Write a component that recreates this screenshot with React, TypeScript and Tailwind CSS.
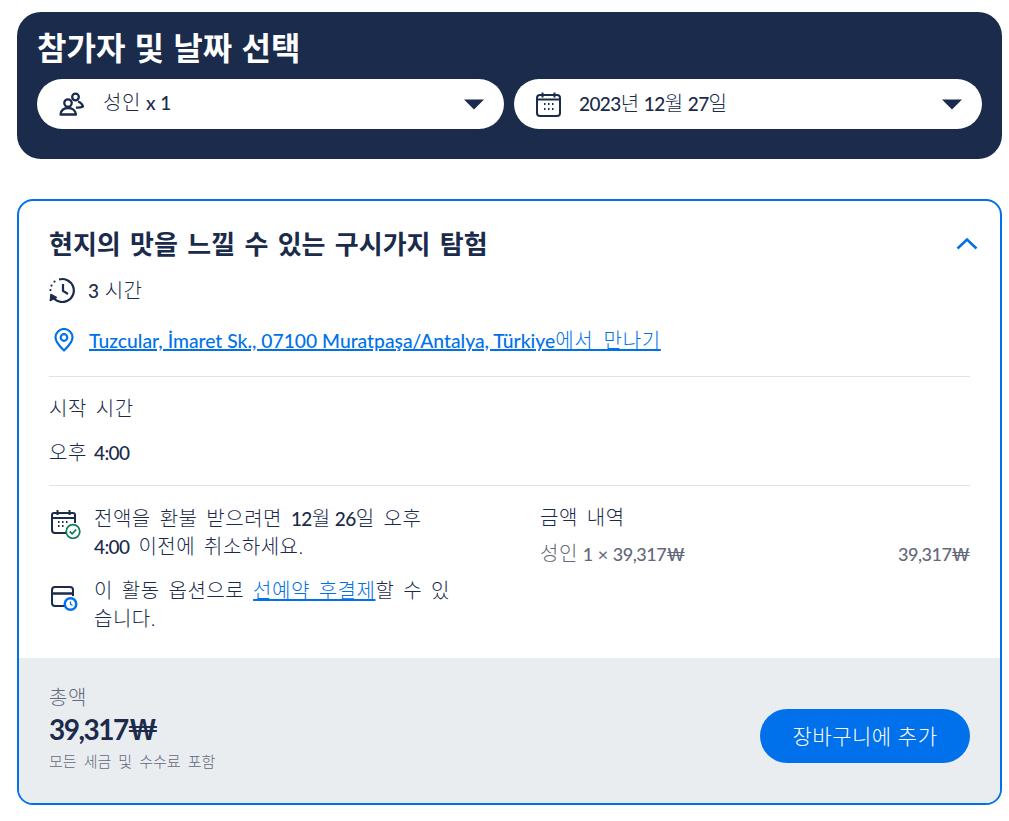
import { ReactNode } from "react";

const FONT = "font-['Lato','Noto_Sans_CJK_KR',sans-serif]";

function Num({ children, className = "[word-spacing:0]" }: { children: ReactNode; className?: string }) {
  return <span className={`text-[19px] font-medium leading-none tracking-[-0.6px] ${className}`}>{children}</span>;
}

function Price({ children }: { children: ReactNode }) {
  return <span className="text-[18px] font-medium leading-none tracking-[-0.5px] [word-spacing:1px]">{children}</span>;
}

function Caret() {
  return (
    <svg width="20" height="11" viewBox="0 0 20 11" className="shrink-0">
      <path d="M0 .5h20L10 10.500z" fill="#1b2b4b" />
    </svg>
  );
}

function PeopleIcon() {
  return (
    <svg width="25" height="25" viewBox="0 0 25 25" fill="none" stroke="#1b2b4b" strokeWidth="2.300" className="shrink-0">
      <circle cx="9" cy="11" r="3.700" />
      <circle cx="16.500" cy="5" r="3.300" />
      <path d="M1.500 22.500c0-4 3.500-6.500 7.500-6.500s7.500 2.500 8 6.500z" strokeLinejoin="round" />
      <path d="M19 9.500c2 .5 4 2 5 5-2 1-4.500 1.500-7 1" />
    </svg>
  );
}

function CalendarIcon() {
  return (
    <svg width="25" height="25" viewBox="0 0 25 25" fill="none" className="shrink-0">
      <rect x="1" y="3" width="23" height="21" rx="3" stroke="#1b2b4b" strokeWidth="2" />
      <path d="M1 7.500h23" stroke="#1b2b4b" strokeWidth="2" />
      <path d="M6.500 .5v5M18.500 .5v5" stroke="#1b2b4b" strokeWidth="2" />
      <path d="M8 12h1.500M12 12h1.500M16 12h1.500M8 17h1.500M12 17h1.500M16 17h1.500" stroke="#1b2b4b" strokeWidth="2" />
    </svg>
  );
}

function HistoryIcon() {
  return (
    <svg width="27" height="26" viewBox="0 0 27 26" fill="none" stroke="#1b2b4b" strokeWidth="2.200" className="shrink-0">
      <path d="M10 2.500a11.500 11.500 0 1 1-6.500 17" />
      <path d="M14 7v7l5 3" />
      <path d="M1 24l.8-7 6.200 3.500z" fill="#1b2b4b" strokeWidth="1" />
      <path d="M5.500 4.500v.1M2.500 8.500v.1M1.500 13v.1" strokeLinecap="round" />
    </svg>
  );
}

function PinIcon() {
  return (
    <svg width="20" height="24" viewBox="0 0 20 24" fill="none" stroke="#0071eb" strokeWidth="2.200" className="shrink-0">
      <path d="M10 22.500C6 18.500 1.500 14.500 1.500 9.500a8.500 8.500 0 0 1 17 0c0 5-4.500 9-8.500 13z" strokeLinejoin="round" />
      <circle cx="10" cy="9.500" r="3.300" />
    </svg>
  );
}

function RefundIcon() {
  return (
    <svg width="30" height="30" viewBox="0 0 30 30" fill="none" className="ml-[2px] mt-[5px] shrink-0">
      <path d="M15 24H4a3 3 0 0 1-3-3V6a2 2 0 0 1 2-2h19a2 2 0 0 1 2 2v8" stroke="#1b2b4b" strokeWidth="2" />
      <path d="M1 9h23M6.500 1v5M18.500 1v5" stroke="#1b2b4b" strokeWidth="2" />
      <path d="M7 13h1.500M11 13h1.500M15 13h1.500M7 17h1.500M11 17h1.500" stroke="#1b2b4b" strokeWidth="1.800" />
      <circle cx="22" cy="22.500" r="6.800" fill="#fff" stroke="#0f7f55" strokeWidth="1.800" />
      <path d="M18.800 22.500l2.300 2.300 4.100-4.300" stroke="#0f7f55" strokeWidth="1.800" />
    </svg>
  );
}

function PayLaterIcon() {
  return (
    <svg width="28" height="27" viewBox="0 0 28 27" fill="none" className="ml-[2px] mt-[10px] shrink-0">
      <path d="M14 20H4a3 3 0 0 1-3-3V4a3 3 0 0 1 3-3h15a3 3 0 0 1 3 3v6" stroke="#1b2b4b" strokeWidth="2" />
      <path d="M1 7.500h21" stroke="#1b2b4b" strokeWidth="2.500" />
      <circle cx="19.500" cy="18" r="7" fill="#0071eb" />
      <circle cx="19.500" cy="18" r="4.500" fill="#fff" />
      <path d="M19.500 15.500V18l2 1.500" stroke="#0071eb" strokeWidth="1.300" />
    </svg>
  );
}

function Select({ icon, className, children }: { icon: ReactNode; className: string; children: ReactNode }) {
  return (
    <div className={`flex h-[50px] items-center justify-between rounded-[25px] bg-white pl-[22px] pr-[20px] ${className}`}>
      <div className="flex items-center">{icon}{children}</div>
      <Caret />
    </div>
  );
}

export default function App() {
  return (
    <main className={`${FONT} min-h-screen bg-white pb-4 pl-[17px] pr-[7px] pt-[12px] text-[20px] font-light tracking-[0.5px] text-[#1b2b4b] [word-spacing:3px]`}>
      {/* Participants and date */}
      <section className="h-[147px] rounded-[24px] bg-[#1b2b4b] px-[20px] pt-[17px]">
        <h2 className="text-[32px] font-bold leading-[38px] tracking-normal text-white [word-spacing:1.5px]">참가자 및 날짜 선택</h2>
        <div className="mt-[12px] flex gap-[10px]">
          <Select icon={<PeopleIcon />} className="w-[467px]">
            <span className="mb-[4px] ml-[19px]">성인<Num className="[word-spacing:1px]"> x 1</Num></span>
          </Select>
          <Select icon={<CalendarIcon />} className="flex-1">
            <span className="mb-[2px] ml-[18px]"><Num>2023</Num>년<Num> 12</Num>월<Num> 27</Num>일</span>
          </Select>
        </div>
      </section>

      {/* Tour option */}
      <section className="mt-[40px] overflow-hidden rounded-[16px] border-2 border-[#0071eb]">
        <div className="px-[30px] pb-[26px] pt-[27px]">
          <div className="flex items-center justify-between">
            <h3 className="text-[26px] font-bold leading-[32px] tracking-normal [word-spacing:3px]">현지의 맛을 느낄 수 있는 구시가지 탐험</h3>
            <svg width="22" height="13" viewBox="0 0 22 13" fill="none" stroke="#0071eb" strokeWidth="2.500" className="-mr-[8px] mb-[2px]">
              <path d="M1.500 11.500L11 2.500l9.500 9" />
            </svg>
          </div>
          <div className="mt-[17px] flex h-[26px] items-center">
            <HistoryIcon />
            <span className="ml-[12px]"><Num className="[word-spacing:2px]">3 </Num>시간</span>
          </div>
          <div className="mt-[25px] flex h-[24px] items-center text-[#0071eb]">
            <span className="ml-[5px] flex"><PinIcon /></span>
            <a href="#" className="ml-[15px] tracking-[0.7px] underline [word-spacing:4px]"><span className="text-[19.300px] font-medium tracking-normal [word-spacing:0]">Tuzcular, İmaret Sk., 07100 Muratpaşa/Antalya, Türkiye</span>에서 만나기</a>
          </div>
          <div className="mt-[24px] border-t border-[#dfe3e6] pt-[18px]">
            <div className="leading-[26px]">시작 시간</div>
            <div className="mt-[18px] leading-[26px]">오후<Num className="[word-spacing:3px]"> 4:00</Num></div>
          </div>
          <div className="mt-[20px] grid grid-cols-[491px_1fr] border-t border-[#dfe3e6] pt-[18px]">
            <div className="flex w-[405px] flex-col gap-[16px]">
              <div className="flex gap-[13px]">
                <RefundIcon />
                <p className="leading-[28px]">전액을 환불 받으려면 <Num>12</Num>월<Num> 26</Num>일 오후 <Num>4:00</Num> 이전에 취소하세요.</p>
              </div>
              <div className="flex gap-[15px]">
                <PayLaterIcon />
                <p className="leading-[28px]">이 활동 옵션으로 <a href="#" className="text-[#0071eb] underline">선예약 후결제</a>할 수 있습니다.</p>
              </div>
            </div>
            <div className="-mt-[1px]">
              <div className="leading-[28px]">금액 내역</div>
              <div className="mt-[8px] flex items-baseline justify-between leading-[28px] text-[#63687a]">
                <span>성인<Price> 1 × 39,317₩</Price></span>
                <Price>39,317₩</Price>
              </div>
            </div>
          </div>
        </div>
        <div className="flex h-[145px] items-start justify-between bg-[#e9edf0] px-[30px] pt-[26px]">
          <div>
            <div className="leading-[26px] text-[#63687a]">총액</div>
            <div className="text-[28px] font-bold leading-[38px] tracking-[-1.500px]">39,317₩</div>
            <div className="mt-[1px] text-[15px] leading-[24px] tracking-normal text-[#63687a]">모든 세금 및 수수료 포함</div>
          </div>
          <button className="mt-[25px] h-[54px] w-[210px] rounded-[27px] bg-[#0071eb] text-[21px] text-white">장바구니에 추가</button>
        </div>
      </section>
    </main>
  );
}
